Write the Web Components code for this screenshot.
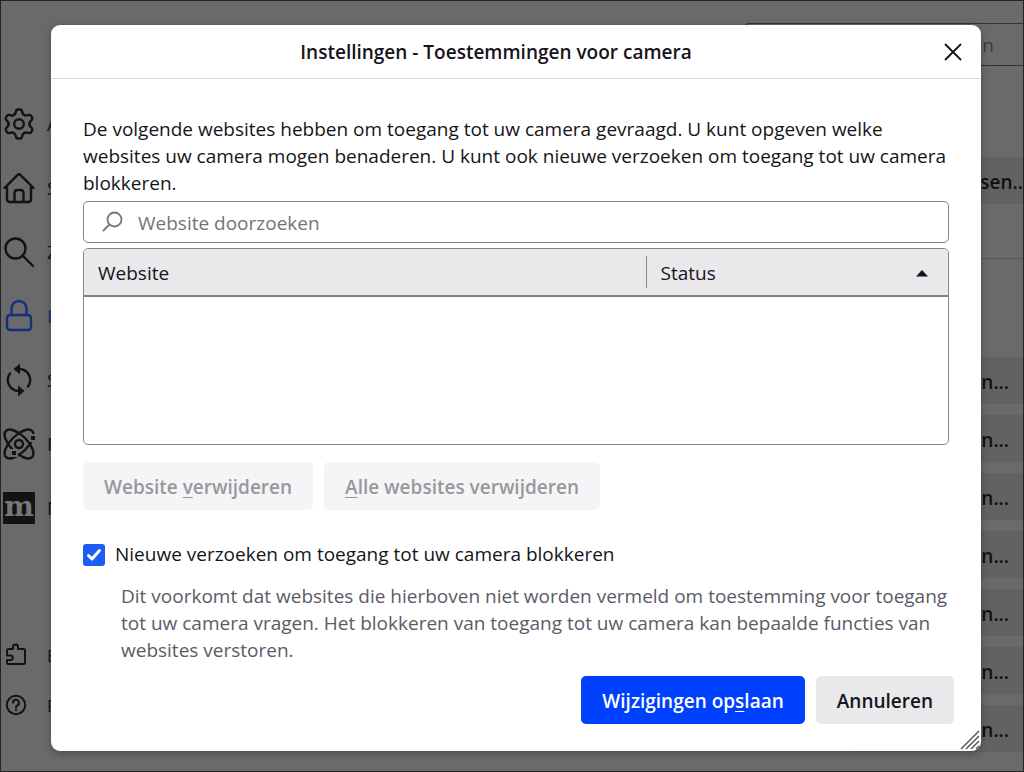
<!DOCTYPE html>
<html lang="nl">
<head>
<meta charset="utf-8">
<meta name="viewport" content="width=device-width, initial-scale=1">
<title>Instellingen</title>
<style>
  body {
    margin: 0;
    font-family: "Open Sans", "Noto Sans", sans-serif;
    font-size: 19px;
    line-height: 27px;
    color: #15141a;
    background: #6a6a6a;
  }
</style>
</head>
<body>
<settings-page>
  <nav-item slot="nav" icon="gear">A</nav-item>
  <nav-item slot="nav" icon="home">S</nav-item>
  <nav-item slot="nav" icon="search">Z</nav-item>
  <nav-item slot="nav" icon="lock" selected>P</nav-item>
  <nav-item slot="nav" icon="sync">S</nav-item>
  <nav-item slot="nav" icon="atom">F</nav-item>
  <nav-item slot="nav" icon="mozilla">M</nav-item>
  <nav-item slot="support" icon="puzzle" small>E</nav-item>
  <nav-item slot="support" icon="help" small>F</nav-item>
</settings-page>

<permission-dialog>
  <span slot="title">Instellingen - Toestemmingen voor camera</span>
  <span slot="intro">De volgende websites hebben om toegang tot uw camera gevraagd. U kunt opgeven welke websites uw camera mogen benaderen. U kunt ook nieuwe verzoeken om toegang tot uw camera blokkeren.</span>
  <search-field placeholder="Website doorzoeken"></search-field>
  <site-table></site-table>
  <div slot="actions">
    <action-button disabled>Website <u>v</u>erwijderen</action-button>
    <action-button disabled><u>A</u>lle websites verwijderen</action-button>
  </div>
  <check-option slot="option">
    Nieuwe verzoeken om toegang tot uw camera blokkeren
    <span slot="hint">Dit voorkomt dat websites die hierboven niet worden vermeld om toestemming voor toegang tot uw camera vragen. Het blokkeren van toegang tot uw camera kan bepaalde functies van websites verstoren.</span>
  </check-option>
  <action-button slot="footer" primary>Wijzigingen op<u>s</u>laan</action-button>
  <action-button slot="footer">Annuleren</action-button>
</permission-dialog>

<script>
// The gear is one tooth repeated around the centre
const GEAR_TEETH = [0, 60, 120, 180, 240, 300].map(angle =>
  `<path transform="rotate(${angle} 16 16)" d="M10.8 7Q12.1 6.250 12.700 4.500L13.100 2.900Q13.500 1.500 15 1.500H17Q18.500 1.500 18.900 2.900L19.300 4.500Q19.900 6.250 21.200 7"/>`
).join('');

const ICONS = {
  gear: `<svg viewBox="0 0 32 32" width="32" height="32">${GEAR_TEETH}<circle cx="16" cy="16" r="4.8"/></svg>`,
  home: `<svg viewBox="0 0 32 32" width="32" height="32"><path d="M1.5 16 14.4 3.1q1.6-1.5 3.2 0L30.5 16M4 13.6V27q0 3 3 3h18q3 0 3-3V13.6M11.5 30V21q0-3 3-3h3q3 0 3 3v9"/></svg>`,
  search: `<svg viewBox="0 0 32 32" width="32" height="32"><circle cx="12.5" cy="12.5" r="10"/><path d="m20 20 10 10"/></svg>`,
  lock: `<svg viewBox="0 0 32 32" width="32" height="32"><rect x="4" y="15" width="24" height="15" rx="3"/><path d="M8.5 15V8.5a7.5 7.5 0 0 1 15 0V15"/></svg>`,
  sync: `<svg viewBox="0 0 32 32" width="32" height="32"><path d="M17 5A11 11 0 0 1 25 22.500M15 27A11 11 0 0 1 7 9.500"/><path class="fill" d="M17-.5v11l-6.500-5.500zM15 21.500v11l6.500-5.500z"/></svg>`,
  atom: `<svg viewBox="0 0 32 32" width="32" height="32"><ellipse cx="16" cy="16" rx="18.500" ry="8.500" transform="rotate(45 16 16)"/><ellipse cx="16" cy="16" rx="18.500" ry="8.500" transform="rotate(-45 16 16)"/><circle cx="16" cy="16" r="4"/><path class="dot" d="M27 7h6v6h-6zM8 22h6v6H8z"/></svg>`,
  mozilla: `<svg viewBox="0 0 32 32" width="32" height="32"><path class="fill" d="M0 0h32v32H0z"/><text x="16" y="24" text-anchor="middle" font-family="DejaVu Serif" font-size="28" font-weight="bold">m</text></svg>`,
  puzzle: `<svg viewBox="0 0 24 24" width="24" height="24"><path d="M3 10V7.500Q3 6 4.500 6H9V4a2.500 2.500 0 0 1 5 0V6h5.500Q21 6 21 7.500v12q0 1.500-1.500 1.500h-15Q3 21 3 19.500V17h3.500a2.200 2.200 0 0 0 0-4.500H3V10"/></svg>`,
  help: `<svg viewBox="0 0 24 24" width="24" height="24"><circle cx="12" cy="12" r="9.200"/><path d="M9 9.800a3 3 0 1 1 4.400 2.600q-1.400.8-1.400 2M12 16.800v.4"/></svg>`
};

// Clones the given markup into an open shadow root
function attach(element, markup) {
  const template = document.createElement('template');
  template.innerHTML = markup;
  element.attachShadow({ mode: 'open' }).appendChild(template.content.cloneNode(true));
}

// Dimmed settings page behind the dialog
class SettingsPage extends HTMLElement {
  constructor() {
    super();
    const buttons = '<button>n...</button>'.repeat(7);
    attach(this, `
      <style>
        :host {
          display: flex;
          justify-content: space-between;
          box-sizing: border-box;
          min-height: 100vh;
          border: 1px solid #242424;
          overflow: hidden;
        }
        nav { display: flex; flex-direction: column; padding: 91px 0 41px 2px; }
        .support { margin-top: auto; }
        main { display: flex; flex-direction: column; align-items: flex-end; width: 278px; padding-top: 22px; }
        input {
          box-sizing: border-box;
          width: 100%;
          height: 43px;
          padding: 0 29px;
          border: 1px solid #343438;
          border-right: 0;
          border-radius: 4px 0 0 4px;
          background: #6a6a6a;
          color: #3c3c40;
          font: inherit;
          text-align: right;
        }
        button {
          width: 174px;
          height: 47px;
          padding: 3px 14px 0;
          border: 0;
          border-radius: 4px 0 0 4px;
          background: #626263;
          color: #101014;
          font: inherit;
          font-weight: 600;
          text-align: right;
        }
        .exceptions { margin-top: 91px; padding-right: 0; }
        hr { width: 100%; margin: 54px 0 98px; border: 0; border-top: 1px solid #565656; }
        .list { display: flex; flex-direction: column; gap: 11px; }
      </style>
      <nav>
        <slot name="nav"></slot>
        <div class="support"><slot name="support"></slot></div>
      </nav>
      <main>
        <input type="text" value="n" aria-label="n">
        <button class="exceptions">ssen..</button>
        <hr>
        <div class="list">${buttons}</div>
      </main>`);
  }
}

class NavItem extends HTMLElement {
  constructor() {
    super();
    attach(this, `
      <style>
        :host { display: block; color: #131316; }
        :host([selected]) { color: #142f7c; }
        a { display: flex; align-items: center; gap: 12px; height: 64px; color: inherit; text-decoration: none; }
        :host([small]) a { height: 50px; font-size: 17px; }
        .icon { display: flex; justify-content: center; width: 32px; }
        svg { fill: none; stroke: currentColor; stroke-width: 2.4; stroke-linejoin: round; stroke-linecap: round; overflow: visible; }
        :host([small]) svg { stroke-width: 2; }
        :host([small]) .icon { width: 26px; padding-right: 6px; }
        .fill { fill: currentColor; stroke: none; }
        .dot { fill: currentColor; stroke: #6a6a6a; stroke-width: 2; }
        text { fill: #77777a; stroke: none; }
      </style>
      <a href="#"><span class="icon">${ICONS[this.getAttribute('icon')]}</span><slot></slot></a>`);
  }
}

class PermissionDialog extends HTMLElement {
  constructor() {
    super();
    attach(this, `
      <style>
        :host { position: absolute; inset: 0 0 auto; display: block; padding: 25px 43px 22px 51px; }
        section {
          position: relative;
          border-radius: 9px;
          background: #fff;
          box-shadow: 0 2px 8px rgba(0, 0, 0, .3);
        }
        header { display: flex; align-items: center; height: 53px; padding-right: 16px; border-bottom: 1px solid #d8d8da; }
        h1 { flex: 1; margin: 0; padding-top: 2px; font-size: 19px; font-weight: 600; text-align: center; }
        .close { display: flex; align-items: center; justify-content: center; width: 24px; height: 24px; padding: 0; border: 0; background: none; }
        .close svg { stroke: #15141a; stroke-width: 1.8; stroke-linecap: round; }
        .body { padding: 37px 32px 0; }
        p { margin: 0 0 4px; }
        .list { display: flex; flex-direction: column; gap: 5px; }
        ::slotted([slot="actions"]) { display: flex; gap: 11px; margin: 17px 0 31px; }
        footer { display: flex; justify-content: flex-end; gap: 11px; padding: 12px 27px 27px; }
        .resizer { position: absolute; right: 1px; bottom: 1px; stroke: #55555a; stroke-width: 1.5; }
      </style>
      <section role="dialog" aria-labelledby="title">
        <header>
          <h1 id="title"><slot name="title"></slot></h1>
          <button class="close" aria-label="Sluiten">
            <svg width="18" height="18" viewBox="0 0 18 18"><path d="m1.5 1.5 15 15m0-15-15 15"/></svg>
          </button>
        </header>
        <div class="body">
          <p><slot name="intro"></slot></p>
          <div class="list"><slot></slot></div>
          <slot name="actions"></slot>
          <slot name="option"></slot>
        </div>
        <footer><slot name="footer"></slot></footer>
        <svg class="resizer" width="20" height="20" viewBox="0 0 20 20"><path d="M1 19 19 1M6 19 19 6M11 19l8-8M16 19l3-3"/></svg>
      </section>`);
  }
}

class SearchField extends HTMLElement {
  constructor() {
    super();
    const placeholder = this.getAttribute('placeholder');
    attach(this, `
      <style>
        :host { display: block; }
        label {
          display: flex;
          align-items: center;
          gap: 14px;
          box-sizing: border-box;
          height: 42px;
          padding: 0 18px;
          border: 1px solid #85858c;
          border-radius: 5px;
        }
        svg { fill: none; stroke: #77777c; stroke-width: 1.8; stroke-linecap: round; }
        input { flex: 1; min-width: 0; padding: 2px 0 0; border: 0; outline: 0; background: none; color: #15141a; font: inherit; }
        input::placeholder { color: #737378; opacity: 1; }
      </style>
      <label>
        <svg width="22" height="22" viewBox="0 0 22 22"><circle cx="12.500" cy="8.500" r="7"/><path d="m7.500 13.500-6 6"/></svg>
        <input type="text" placeholder="${placeholder}" aria-label="${placeholder}">
      </label>`);
  }
}

// Empty list of sites, sorted by status
class SiteTable extends HTMLElement {
  constructor() {
    super();
    attach(this, `
      <style>
        :host {
          display: block;
          box-sizing: border-box;
          min-height: 197px;
          border: 1px solid #85858c;
          border-radius: 5px;
          overflow: hidden;
        }
        table { width: 100%; border-collapse: collapse; table-layout: fixed; }
        th { height: 46px; padding: 0; border-bottom: 2px solid #80808a; background: #e9e9eb; font-weight: 400; text-align: left; }
        th:first-child { width: 65%; }
        .cell { display: flex; align-items: center; justify-content: space-between; box-sizing: border-box; height: 32px; padding: 2px 19px 0 14px; }
        th + th .cell { border-left: 1px solid #85858c; }
      </style>
      <table>
        <thead>
          <tr>
            <th scope="col"><div class="cell">Website</div></th>
            <th scope="col" aria-sort="ascending"><div class="cell">Status
              <svg width="14" height="8" viewBox="0 0 14 8"><path d="M1 7.5 7 1l6 6.500z" fill="#15141a"/></svg></div></th>
          </tr>
        </thead>
        <tbody></tbody>
      </table>`);
  }
}

class ActionButton extends HTMLElement {
  constructor() {
    super();
    attach(this, `
      <style>
        :host { display: block; }
        button {
          height: 48px;
          padding: 2px 21px 0;
          border: 0;
          border-radius: 5px;
          background: #e9e9eb;
          color: #15141a;
          font: inherit;
          font-weight: 600;
          white-space: nowrap;
        }
        button:disabled { background: #f5f5f7; color: #98989c; }
        :host([primary]) button { background: #0040ff; color: #fff; }
        ::slotted(u) { text-decoration-thickness: 1px; text-underline-offset: 3px; }
      </style>
      <button><slot></slot></button>`);
    this.shadowRoot.querySelector('button').disabled = this.hasAttribute('disabled');
  }
}

class CheckOption extends HTMLElement {
  constructor() {
    super();
    attach(this, `
      <style>
        :host { display: block; }
        label { display: flex; align-items: center; gap: 10px; }
        .box { display: grid; }
        .box > * { grid-area: 1 / 1; }
        input { width: 22px; height: 22px; margin: 0; appearance: none; border-radius: 3px; background: #1d5cf5; }
        svg { fill: none; stroke: #fff; stroke-width: 3; stroke-linecap: round; stroke-linejoin: round; pointer-events: none; }
        input:not(:checked) + svg { visibility: hidden; }
        .hint { margin: 15px -6px 0 38px; color: #5b5b66; }
      </style>
      <label>
        <span class="box">
          <input type="checkbox" checked>
          <svg width="22" height="22" viewBox="0 0 22 22"><path d="m5.5 11.5 3.500 3.500 7.500-8.500"/></svg>
        </span>
        <span><slot></slot></span>
      </label>
      <div class="hint"><slot name="hint"></slot></div>`);
  }
}

customElements.define('settings-page', SettingsPage);
customElements.define('nav-item', NavItem);
customElements.define('permission-dialog', PermissionDialog);
customElements.define('search-field', SearchField);
customElements.define('site-table', SiteTable);
customElements.define('action-button', ActionButton);
customElements.define('check-option', CheckOption);
</script>
</body>
</html>
